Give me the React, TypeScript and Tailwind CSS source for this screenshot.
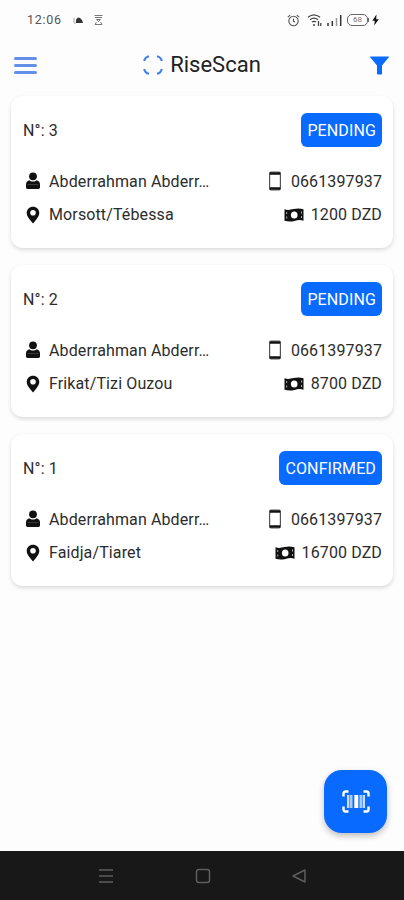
import React from 'react';

interface Order {
  number: number;
  status: string;
  customer: string;
  phone: string;
  address: string;
  price: string;
}

const orders: Order[] = [
  { number: 3, status: 'PENDING', customer: 'Abderrahman Abderr…', phone: '0661397937', address: 'Morsott/Tébessa', price: '1200 DZD' },
  { number: 2, status: 'PENDING', customer: 'Abderrahman Abderr…', phone: '0661397937', address: 'Frikat/Tizi Ouzou', price: '8700 DZD' },
  { number: 1, status: 'CONFIRMED', customer: 'Abderrahman Abderr…', phone: '0661397937', address: 'Faidja/Tiaret', price: '16700 DZD' },
];

const PersonIcon = () => (
  <svg className="h-[18px] w-[14px]" viewBox="0 0 14 18" fill="#111">
    <circle cx="7" cy="4.3" r="3.900" />
    <path d="M3.200 8.200C1.200 8.900 0 10.300 0 12.300v3C0 16.400.6 17 1.600 17h10.800c1 0 1.600-.6 1.600-1.700v-3c0-2-1.200-3.400-3.200-4.100C8.800 10 5.200 10 3.200 8.200z" />
    <path d="M1.500 12.500h11" stroke="#555" strokeWidth=".6" />
  </svg>
);

const PinIcon = () => (
  <svg className="h-[18px] w-[14px]" viewBox="0 0 14 18" fill="#111" fillRule="evenodd">
    <path d="M7 .8C3.400.8.7 3.500.7 7c0 2.600 1.700 5 4 7.700L7 17.400l2.300-2.700c2.300-2.700 4-5.100 4-7.700C13.300 3.500 10.600.8 7 .8zM7 4a2.800 2.800 0 1 1 0 5.600A2.800 2.800 0 0 1 7 4z" />
  </svg>
);

const PhoneIcon = () => (
  <svg className="h-5 w-3" viewBox="0 0 12 20">
    <rect x=".6" y="1" width="10.800" height="18" rx="1.500" fill="#fff" stroke="#555" strokeWidth="1.200" />
    <path d="M.8 1.200h10.400v2.500H.8zM.8 16.300h10.400v2.500H.8z" fill="#111" />
  </svg>
);

const MoneyIcon = () => (
  <svg className="h-[14px] w-5" viewBox="0 0 20 14">
    <path d="M.5 1.300c3.500 1.200 6 .5 9-.2 3.200-.8 6.300-.9 10 .1v11.500c-3.500-1.200-6-.5-9 .2-3.200.8-6.300.9-10-.1z" fill="#111" />
    <ellipse cx="10.200" cy="7" rx="3.300" ry="3.500" fill="#fff" />
    <path d="M2.700 4v2M2.700 8.500v2M17.500 3.500v2M17.500 8v2" stroke="#aaa" strokeWidth="1" />
  </svg>
);

const StatusBar: React.FC = () => (
  <div className="flex h-[38px] items-center pl-[27px] pr-[25px] pt-0.5 text-[#555]">
    <span className="text-[12.500px] tracking-[0.7px]">12:06</span>
    <svg className="ml-[11px] h-2.5 w-[11px]" viewBox="0 0 11 10">
      <path d="M3 8V4.500L5 2.500l2 .5 2 2 1 3z" fill="#333" />
      <path d="M1 3v5h2" stroke="#aaa" fill="none" />
    </svg>
    <svg className="ml-[9px] h-3 w-[11px]" viewBox="0 0 11 12" fill="none" stroke="#777">
      <path d="M1.500 1.500h8M2 3.500h7M3.500 5.500h4L5.500 7.500zM3.500 8l-1.500 2.500h7L7.500 8" />
    </svg>
    <div className="ml-auto flex items-center">
      <svg className="h-[13px] w-[13px]" viewBox="0 0 13 13" fill="none" stroke="#555" strokeWidth="1.100">
        <circle cx="6.500" cy="7" r="4.700" />
        <path d="M6.500 4.500V7.300L8 8M.8 3.200l2.400-2M12.200 3.200l-2.400-2" />
      </svg>
      <svg className="ml-[7px] h-[13px] w-[15px]" viewBox="0 0 15 13" fill="none" stroke="#444" strokeWidth="1.300">
        <path d="M1 3.300c3.800-3 8.200-3 12 0M3 5.800c2.500-2 5.500-2 8 0M5 8.100c1.300-1 2.700-1 4 0" />
        <path d="M6 11h2M11.500 7v5M13.800 9v3" />
      </svg>
      <svg className="ml-[5px] h-3 w-[15px]" viewBox="0 0 15 12" fill="none" strokeWidth="1.500">
        <path d="M1 9v3M5.300 7v5" stroke="#333" />
        <path d="M9.500 4v8" stroke="#999" />
        <path d="M13.700 1v11" stroke="#333" />
      </svg>
      <div className="ml-[5px] flex h-3 w-[21px] items-center justify-center rounded-[5px] border border-[#666] text-[8px] leading-none text-[#777]">68</div>
      <div className="h-1 w-px bg-[#666]" />
      <svg className="ml-[3px] h-3 w-[7px]" viewBox="0 0 7 12" fill="#111">
        <path d="M4.500.5.3 6.800h2.500L2.200 11.500l4.600-6.200H4.200z" />
      </svg>
    </div>
  </div>
);

const Header: React.FC = () => (
  <header className="flex h-[54px] items-center justify-between pl-3.5 pr-[15px]">
    <div className="flex w-[23px] flex-col gap-1">
      <div className="h-[3px] rounded-sm bg-[#638fe8]" />
      <div className="h-[3px] rounded-sm bg-[#638fe8]" />
      <div className="h-[3px] rounded-sm bg-[#638fe8]" />
    </div>
    <div className="mr-[3px] flex items-center gap-[7px]">
      <svg className="h-5 w-5" viewBox="0 0 20 20" fill="none" stroke="#3f7fee" strokeWidth="2.100">
        <path d="M1.200 6Q2 2 6 1.200M14 1.200q4 .8 4.800 4.800M18.800 14q-.8 4-4.800 4.800M6 18.800q-4-.8-4.800-4.800" />
      </svg>
      <h1 className="text-[22px] leading-7 text-[#222]">RiseScan</h1>
    </div>
    <svg className="h-[19px] w-[19px]" viewBox="0 0 19 19" fill="#0a6cff">
      <path d="M.6.500h17.800c.5 0 .6.500.3.900L12 9.500v8.300c0 .5-.3.700-.7.700H7.700c-.4 0-.7-.2-.7-.7V9.500L.3 1.400C0 1 .1.500.6.500z" />
    </svg>
  </header>
);

const OrderCard: React.FC<{ order: Order }> = ({ order }) => (
  <div className="h-[152px] rounded-[12px] bg-white pl-3 pr-[11px] pt-[17px] tracking-[0.12px] shadow-[0_2px_4px_rgba(0,0,0,0.14)]">
    <div className="flex items-center justify-between">
      <span className="pt-px">N°: {order.number}</span>
      <span className="flex h-[34px] items-center rounded-[6px] bg-[#086aff] px-1.5 pt-px text-white">{order.status}</span>
    </div>
    <div className="mt-[17px] flex h-[34px] items-center">
      <div className="ml-[3px] mr-[9px]"><PersonIcon /></div>
      <span className="pt-px">{order.customer}</span>
      <div className="ml-auto flex items-center gap-2.5">
        <PhoneIcon />
        <span className="pt-px">{order.phone}</span>
      </div>
    </div>
    <div className="flex h-[34px] items-center">
      <div className="ml-[3px] mr-[9px]"><PinIcon /></div>
      <span>{order.address}</span>
      <div className="ml-auto flex items-center gap-[7px]">
        <MoneyIcon />
        <span>{order.price}</span>
      </div>
    </div>
  </div>
);

const NavigationBar: React.FC = () => (
  <nav className="flex h-[49px] items-center justify-between bg-[#181818] pl-[98px] pr-[97px]">
    <svg className="h-4 w-4" viewBox="0 0 16 16" stroke="#5d5d5d" strokeWidth="1.500">
      <path d="M1 2h14M1 8h14M1 14h14" />
    </svg>
    <svg className="h-4 w-4" viewBox="0 0 16 16" fill="none" stroke="#5d5d5d" strokeWidth="1.500">
      <rect x="1.500" y="1.500" width="13" height="13" rx="2.500" />
    </svg>
    <svg className="h-4 w-4" viewBox="0 0 16 16" fill="none" stroke="#5d5d5d" strokeWidth="1.500" strokeLinejoin="round">
      <path d="M14 2v12L2 8z" />
    </svg>
  </nav>
);

const App: React.FC = () => (
  <div className="flex h-[900px] w-[404px] flex-col overflow-hidden bg-[#fdfdfd] font-['Roboto',sans-serif] text-[16px] text-[#2c2c2c]">
    <StatusBar />
    <Header />
    <main className="flex flex-1 flex-col gap-[17px] pl-[11px] pr-[11px] pt-1">
      {orders.map((order) => (
        <OrderCard key={order.number} order={order} />
      ))}
      <button className="mb-[18px] mr-1.5 mt-auto flex h-[63px] w-[63px] items-center justify-center self-end rounded-[18px] bg-[#086aff] shadow-[0_3px_6px_rgba(0,0,0,0.25)]">
        <svg className="h-[23px] w-7" viewBox="0 0 28 23" fill="none" stroke="#fff">
          <path d="M1.500 6.500V3.500q0-2 2-2h3M21.500 1.500h3q2 0 2 2v3M26.500 16.500v3q0 2-2 2h-3M6.500 21.500h-3q-2 0-2-2v-3" strokeWidth="2.400" />
          <path d="M6 5v13M22 5v13" strokeWidth="2" strokeOpacity=".8" />
          <path d="M9 5v13M19 5v13" strokeWidth="3" strokeOpacity=".65" />
          <path d="M14.300 5v13" strokeWidth="4" />
        </svg>
      </button>
    </main>
    <NavigationBar />
  </div>
);

export default App;
